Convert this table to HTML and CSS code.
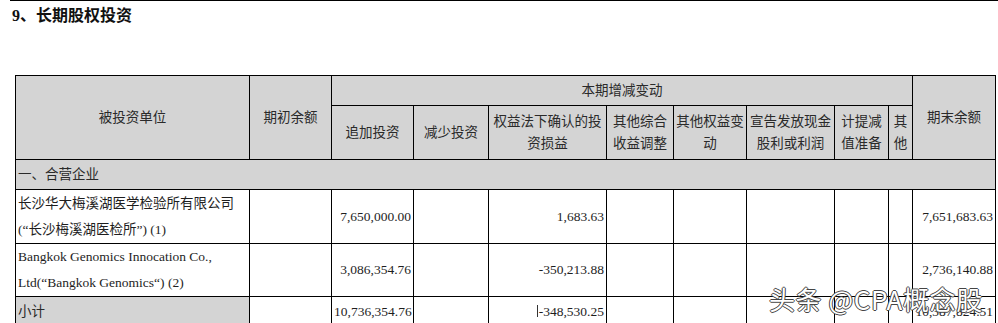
FILE: index.html
```html
<!DOCTYPE html>
<html lang="zh-CN">
<head>
    <meta charset="UTF-8">
    <meta name="viewport" content="width=device-width, initial-scale=1.0">
    <title>长期股权投资</title>
    <link rel="stylesheet" href="styles.css">
</head>
<body>
    <div class="page">
        <div class="rule"></div>
        <h2 class="title">9、长期股权投资</h2>

        <table class="report">
            <colgroup>
                <col style="width:234px">
                <col style="width:82px">
                <col style="width:82px">
                <col style="width:75px">
                <col style="width:118px">
                <col style="width:67px">
                <col style="width:73px">
                <col style="width:88px">
                <col style="width:54px">
                <col style="width:24px">
                <col style="width:83px">
            </colgroup>
            <thead>
                <tr class="h-top">
                    <th rowspan="2">被投资单位</th>
                    <th rowspan="2">期初余额</th>
                    <th colspan="8">本期增减变动</th>
                    <th rowspan="2">期末余额</th>
                </tr>
                <tr class="h-sub">
                    <th>追加投资</th>
                    <th>减少投资</th>
                    <th>权益法下确认的投<br>资损益</th>
                    <th>其他综合<br>收益调整</th>
                    <th>其他权益变<br>动</th>
                    <th>宣告发放现金<br>股利或利润</th>
                    <th>计提减<br>值准备</th>
                    <th>其<br>他</th>
                </tr>
            </thead>
            <tbody>
                <tr class="section">
                    <td colspan="11" class="name">一、合营企业</td>
                </tr>
                <tr class="item">
                    <td class="name">长沙华大梅溪湖医学检验所有限公司<br>(“长沙梅溪湖医检所”) (1)</td>
                    <td></td>
                    <td class="num">7,650,000.00</td>
                    <td></td>
                    <td class="num">1,683.63</td>
                    <td></td>
                    <td></td>
                    <td></td>
                    <td></td>
                    <td></td>
                    <td class="num">7,651,683.63</td>
                </tr>
                <tr class="item item-b">
                    <td class="name">Bangkok Genomics Innocation Co.,<br>Ltd(“Bangkok Genomics“) (2)</td>
                    <td></td>
                    <td class="num">3,086,354.76</td>
                    <td></td>
                    <td class="num">-350,213.88</td>
                    <td></td>
                    <td></td>
                    <td></td>
                    <td></td>
                    <td></td>
                    <td class="num">2,736,140.88</td>
                </tr>
                <tr class="total">
                    <td class="name shade">小计</td>
                    <td></td>
                    <td class="num">10,736,354.76</td>
                    <td></td>
                    <td class="num"><span class="tick"></span>-348,530.25</td>
                    <td></td>
                    <td></td>
                    <td></td>
                    <td></td>
                    <td></td>
                    <td class="num">10,387,824.51</td>
                </tr>
            </tbody>
        </table>

        <div class="watermark">头条 @CPA概念股</div>
    </div>
</body>
</html>
```

FILE: styles.css
```css
body {
    margin: 0;
    background-color: #fff;
    color: #1e1e1e;
    font-family: "Liberation Serif", "Noto Sans CJK SC", serif;
}
.page {
    position: relative;
    height: 323px;
    overflow: hidden;
}
.rule {
    margin-left: 10px;
    border-top: 1px solid #000;
}
.title {
    margin: 5px 0 0 12px;
    font-size: 16px;
    font-weight: bold;
    line-height: 20px;
    color: #111;
}
.report {
    margin: 49px 0 0 15px;
    width: 981px;
    table-layout: fixed;
    border-collapse: collapse;
    font-size: 13.5px;
}
.report th,
.report td {
    border: 1px solid #000;
    padding: 0 2px;
    overflow: hidden;
    white-space: nowrap;
}
.report th {
    background-color: #d4d4d4;
    font-weight: normal;
    text-align: center;
    line-height: 22px;
    color: #2a2a2a;
}
.h-top {
    height: 30px;
}
.h-sub {
    height: 54px;
}
.h-sub th {
    padding: 0;
}
.section {
    height: 30px;
}
.section td {
    background-color: #d4d4d4;
    color: #2a2a2a;
}
.item {
    height: 54px;
}
.item-b {
    height: 53px;
}
.total {
    height: 30px;
}
.name {
    text-align: left;
    line-height: 26px;
}
.num {
    text-align: right;
}
.shade {
    background-color: #d4d4d4;
    color: #2a2a2a;
}
.tick {
    display: inline-block;
    width: 1px;
    height: 12px;
    margin-right: 1px;
    background-color: #333;
    vertical-align: -1px;
}
.watermark {
    position: absolute;
    left: 769px;
    top: 281px;
    font-family: "Noto Sans CJK SC", sans-serif;
    font-size: 26px;
    line-height: 36px;
    letter-spacing: 0.6px;
    color: #fff;
    text-shadow: 1px 0 0 #444, -1px 0 0 #444, 0 1px 0 #444, 0 -1px 0 #444;
}
```
